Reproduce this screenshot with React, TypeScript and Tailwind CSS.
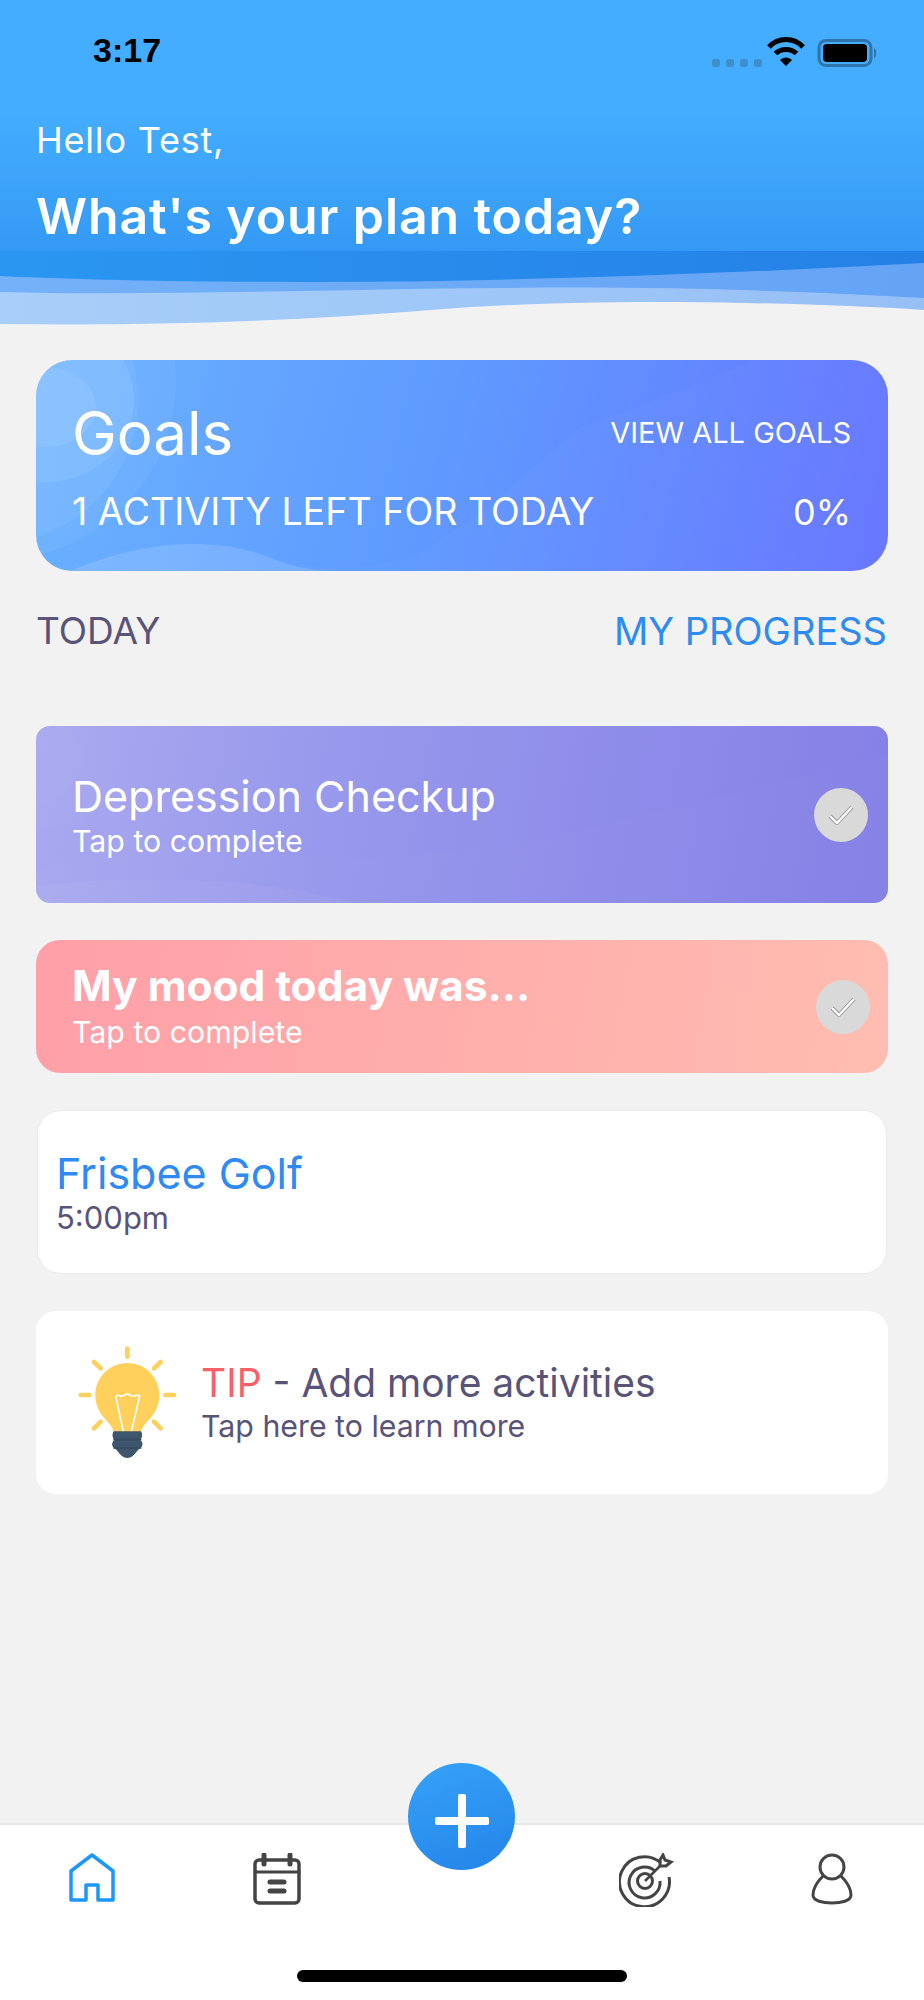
import React from 'react';

const CheckBadge = () => (
  <div className="flex h-[54px] w-[54px] shrink-0 items-center justify-center rounded-full bg-[#d9d9d9]">
    <svg width="26" height="22" viewBox="0 0 26 22" fill="none">
      <path d="M2 12 L9 19 L24 3" stroke="#8d8d8d" strokeWidth="4" strokeLinejoin="round" />
      <path d="M2 12 L9 19 L24 3" stroke="#ffffff" strokeWidth="2.4" />
    </svg>
  </div>
);

const StatusIcons = () => (
  <svg className="mt-[3px]" width="170" height="40" viewBox="0 0 170 40" fill="none">
    {[0, 14, 28, 42].map((x) => (
      <rect key={x} x={x} y="26" width="8" height="8" rx="2.5" fill="#3d8ecb" />
    ))}
    <path d="M57 14 C66 4 82 4 91 14" stroke="#000" strokeWidth="5" />
    <path d="M63.500 20.500 C69 15 79 15 84.500 20.500" stroke="#000" strokeWidth="5" />
    <path d="M68 27 L74 33 L80 27 C77 23.500 71 23.500 68 27 Z" fill="#000" />
    <rect x="107" y="7.500" width="52" height="25" rx="7" stroke="#2f75ab" strokeWidth="3" />
    <rect x="111" y="11" width="44" height="18" rx="4" fill="#000" />
    <path d="M162 15 C165 16 165 24 162 25 Z" fill="#2f75ab" />
  </svg>
);

const HeaderWave = () => (
  <svg className="block w-full" height="74" viewBox="0 0 924 74" preserveAspectRatio="none">
    <defs>
      <linearGradient id="band" x1="0" x2="1" y1="0" y2="0">
        <stop offset="0" stopColor="#2b96f2" />
        <stop offset="1" stopColor="#2580e6" />
      </linearGradient>
      <linearGradient id="w1" x1="0" x2="1" y1="0" y2="0">
        <stop offset="0" stopColor="#74b1f8" />
        <stop offset="1" stopColor="#65a3f5" />
      </linearGradient>
      <linearGradient id="w2" x1="0" x2="1" y1="0" y2="0">
        <stop offset="0" stopColor="#a8cff9" />
        <stop offset="1" stopColor="#96bff6" />
      </linearGradient>
    </defs>
    <rect width="924" height="74" fill="url(#band)" />
    <path d="M0 25 C120 31 300 32 440 30 C600 27 780 20 924 12 L924 74 L0 74 Z" fill="url(#w1)" />
    <path d="M0 41 C150 45 350 38 500 37 C660 35 800 40 924 47 L924 74 L0 74 Z" fill="url(#w2)" />
    <path d="M0 73 C150 75 300 70 430 59 C520 52 600 51 680 51 C780 52 860 55 924 59 L924 74 L0 74 Z" fill="#f2f2f2" />
  </svg>
);

const GoalsShapes = () => (
  <svg className="absolute inset-0 h-full w-full" viewBox="0 0 852 211" preserveAspectRatio="none">
    <circle cx="-40" cy="20" r="180" fill="#fff" opacity="0.05" />
    <circle cx="-40" cy="40" r="142" fill="#fff" opacity="0.06" />
    <ellipse cx="10" cy="40" rx="88" ry="82" fill="#fff" opacity="0.07" />
    <ellipse cx="10" cy="47" rx="50" ry="40" fill="#fff" opacity="0.08" />
    <path d="M34 211 C80 185 120 184 158 184 C195 184 220 190 240 198 C270 212 330 212 376 196 C430 170 470 130 540 70 L720 0 L852 0 L852 211 Z" fill="#fff" opacity="0.02" />
    <path d="M34 211 C80 192 120 184 158 184 C195 184 220 192 240 200 C255 206 270 209 290 211 Z" fill="#fff" opacity="0.13" />
  </svg>
);

const DepressionShapes = () => (
  <svg className="absolute inset-0 h-full w-full" viewBox="0 0 852 177" preserveAspectRatio="none">
    <ellipse cx="10" cy="30" rx="78" ry="70" fill="#fff" opacity="0.02" />
    <ellipse cx="-10" cy="30" rx="56" ry="50" fill="#fff" opacity="0.02" />
    <path d="M0 146 C60 118 160 112 240 126 C330 142 440 122 520 110 L852 30 L852 177 L0 177 Z" fill="#fff" opacity="0.015" />
    <path d="M0 160 C70 152 150 150 230 160 C270 165 300 172 320 177 L0 177 Z" fill="#fff" opacity="0.04" />
  </svg>
);

const Bulb = () => (
  <svg className="block shrink-0" width="140" height="140" viewBox="0 0 420 420" fill="none">
    <g stroke="#ffd15c" strokeWidth="14" strokeLinecap="round">
      <path d="M202 56 V80" />
      <path d="M102 96 L122 115" />
      <path d="M302 96 L282 115" />
      <path d="M62 195 H88" />
      <path d="M316 195 H342" />
      <path d="M102 295 L122 275" />
      <path d="M302 295 L282 275" />
    </g>
    <path d="M202 99 C255 99 298 142 298 195 C298 226 286 248 268 268 C254 283 246 292 243 306 H161 C158 292 150 283 136 268 C118 248 106 226 106 195 C106 142 149 99 202 99 Z" fill="#ffd15c" />
    <path d="M167 198 C176 190 182 204 191 197 C198 191 206 191 213 197 C222 204 230 190 239 198 L214 305 M190 305 L167 198" stroke="#fff" strokeWidth="5" />
    <path d="M161 304 H243 C248 312 248 324 240 330 C250 336 250 348 241 354 C232 360 228 370 218 378 C210 386 194 386 186 378 C176 370 172 360 163 354 C154 348 154 336 164 330 C156 324 156 312 161 304 Z" fill="#3d566e" />
    <path d="M160 329 H244 M160 354 H244" stroke="#34495e" strokeWidth="5" />
  </svg>
);

const HomeIcon = () => (
  <svg width="46" height="50" viewBox="0 0 46 50" fill="none" stroke="#1c97fb" strokeWidth="3.500" strokeLinejoin="round">
    <path d="M23 2 L44 18 V47 H29 V32 H17 V47 H2 V18 Z" />
  </svg>
);

const CalendarIcon = () => (
  <svg width="48" height="52" viewBox="0 0 48 52" fill="none" stroke="#444444" strokeWidth="3.500" strokeLinecap="round">
    <rect x="2" y="7" width="44" height="43" rx="4" />
    <path d="M2 19 H46" strokeWidth="3" />
    <path d="M11 2 V11 M37 2 V11" strokeWidth="5" />
    <path d="M17 29 H31 M17 38 H31" strokeWidth="5" />
  </svg>
);

const TargetIcon = () => (
  <svg width="56" height="54" viewBox="0 0 56 54" fill="none" stroke="#444444" strokeWidth="3">
    <path d="M42 10 A25 25 0 1 0 50 24" />
    <path d="M36 18 A15.500 15.500 0 1 0 41 28" />
    <circle cx="26" cy="28" r="7.500" />
    <path d="M26 28 L42 12" strokeWidth="2.500" />
    <path d="M41 7 L44 2 L46 7 L52 9 L47 13 L41 13 Z" />
  </svg>
);

const PersonIcon = () => (
  <svg width="42" height="52" viewBox="0 0 42 52" fill="none" stroke="#444444" strokeWidth="3">
    <circle cx="21" cy="14" r="12" />
    <path d="M12 23 C6 29 2 36 2 42 C2 48 12 50 21 50 C30 50 40 48 40 42 C40 36 36 29 30 23" />
  </svg>
);

export default function App() {
  return (
    <div className="flex h-[2000px] w-full flex-col overflow-hidden bg-[#f2f2f2] font-['Inter',sans-serif]">
      {/* Header */}
      <header className="shrink-0">
        <div className="h-[251px] bg-[linear-gradient(180deg,#44adff_0%,#44adff_45%,#3499f4_100%)] pr-[42px] pl-[36px] text-white">
          <div className="flex h-[90px] items-start justify-between pt-[30px]">
            <span className="ml-[57px] font-['Liberation_Sans',sans-serif] text-[34px] leading-[40px] font-bold text-black">3:17</span>
            <StatusIcons />
          </div>
          <p className="mt-[28px] text-[36px] leading-[44px] font-normal tracking-[0.8px]">Hello Test,</p>
          <h1 className="mt-[26px] text-[50px] leading-[56px] font-semibold tracking-[0.9px]">What's your plan today?</h1>
        </div>
        <HeaderWave />
      </header>

      <main className="flex-1 px-[36px]">
        {/* Goals card */}
        <section className="relative mt-[35px] h-[211px] overflow-hidden rounded-[36px] bg-[linear-gradient(105deg,#6ab2ff_0%,#5f9bff_45%,#6675ff_100%)] text-white">
          <GoalsShapes />
          <div className="relative flex h-full flex-col pr-[37px] pl-[36px]">
            <div className="mt-[38px] flex items-center justify-between">
              <span className="text-[60px] leading-[70px] font-normal">Goals</span>
              <span className="text-[29px] leading-[40px]">VIEW ALL GOALS</span>
            </div>
            <div className="mt-[20px] flex items-center justify-between text-[37.6px] leading-[48px]">
              <span>1 ACTIVITY LEFT FOR TODAY</span>
              <span className="text-[36px]">0%</span>
            </div>
          </div>
        </section>

        <div className="mt-[37px] flex items-center justify-between text-[38px] leading-[46px]">
          <span className="text-[37px] text-[#5a5378]">TODAY</span>
          <span className="mr-px text-[#2e8cf0]">MY PROGRESS</span>
        </div>

        {/* Activities */}
        <div className="relative mt-[72px] flex h-[177px] items-center overflow-hidden rounded-[14px] bg-[linear-gradient(100deg,#a9a9f0_0%,#9696ec_40%,#8580e6_100%)] pr-[20px] pl-[36px] text-white">
          <DepressionShapes />
          <div className="relative flex-1">
            <p className="text-[43px] leading-[50px]">Depression Checkup</p>
            <p className="mt-[2px] text-[30.3px] leading-[36px]">Tap to complete</p>
          </div>
          <div className="relative"><CheckBadge /></div>
        </div>

        <div className="mt-[37px] flex h-[133px] items-center rounded-[24px] bg-[linear-gradient(100deg,#ff9fa8_0%,#ffbdb0_100%)] pr-[18px] pl-[36px] text-white">
          <div className="flex-1">
            <p className="mt-[-3px] text-[42.5px] leading-[50px] font-bold">My mood today was...</p>
            <p className="mt-[3px] text-[30.3px] leading-[36px]">Tap to complete</p>
          </div>
          <CheckBadge />
        </div>

        <div className="mx-px mt-[37px] flex h-[164px] flex-col justify-center rounded-[24px] border border-[#ebebeb] bg-white pl-[18px]">
          <p className="text-[43px] leading-[50px] text-[#2f8af5]">Frisbee Golf</p>
          <p className="mt-[2px] text-[31px] leading-[36px] text-[#5a5378]">5:00pm</p>
        </div>

        {/* Tip */}
        <div className="mt-[37px] flex h-[183px] items-start rounded-[20px] bg-white pt-[19px] pl-[24px]">
          <Bulb />
          <div className="ml-px pt-[31px] text-[#5a5378]">
            <p className="text-[39px] leading-[44px]"><span className="text-[#f9616a]">TIP</span> - Add more activities</p>
            <p className="mt-[3px] text-[30.3px] leading-[36px]">Tap here to learn more</p>
          </div>
        </div>
      </main>

      {/* Bottom nav */}
      <nav className="relative flex h-[177px] shrink-0 flex-col border-t-2 border-[#e8e8e8] bg-white">
        <div className="grid grid-cols-5 pt-[28px]">
          <div className="flex justify-center"><HomeIcon /></div>
          <div className="flex justify-center"><CalendarIcon /></div>
          <div />
          <div className="flex justify-center"><TargetIcon /></div>
          <div className="flex justify-center"><PersonIcon /></div>
        </div>
        <button className="absolute top-[-62px] left-[408px] flex h-[107px] w-[107px] items-center justify-center rounded-full bg-[linear-gradient(160deg,#36a2f9,#2484e8)]">
          <svg className="mt-[8px]" width="56" height="56" viewBox="0 0 56 56" fill="#fff">
            <rect x="24" y="1" width="8" height="54" rx="2" />
            <rect x="1" y="24" width="54" height="8" rx="2" />
          </svg>
        </button>
        <div className="mx-auto mt-auto mb-[18px] h-[12px] w-[330px] rounded-full bg-black" />
      </nav>
    </div>
  );
}
